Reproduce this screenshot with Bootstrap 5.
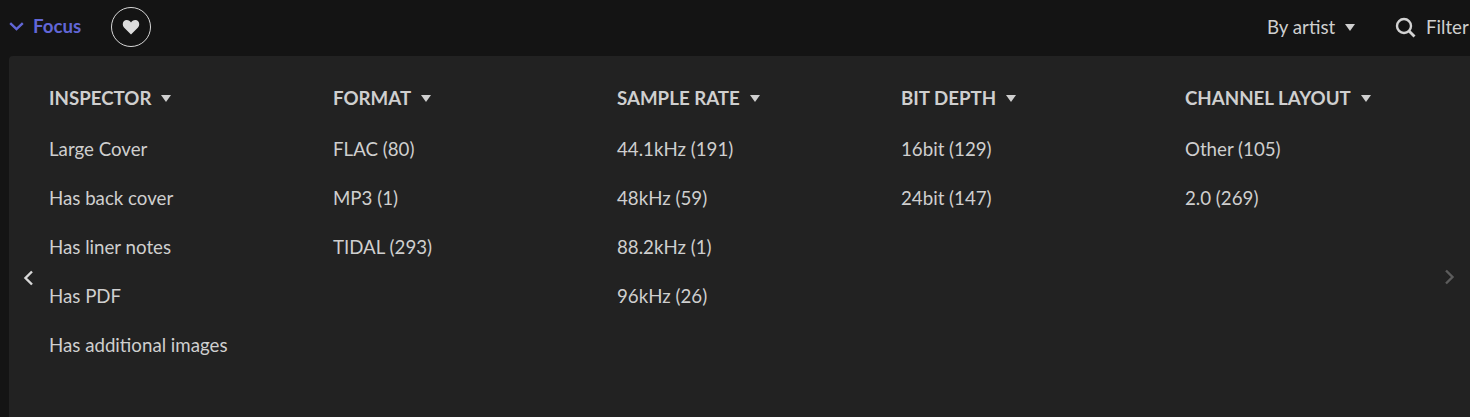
<!DOCTYPE html>
<html lang="en">
<head>
<meta charset="utf-8">
<title>Focus</title>
<link href="https://cdn.jsdelivr.net/npm/bootstrap@5.3.0/dist/css/bootstrap.min.css" rel="stylesheet">
<style>
html, body { height: 417px; overflow: hidden; }
body { background: #141414; color: #cfcfcf; font-family: Lato, sans-serif; font-size: 18.7px; line-height: 1.2; }
.top-bar { height: 56px; padding-left: 9px; padding-bottom: 2px; }
.focus-link { color: #6166d6; font-weight: 700; width: 102px; gap: 9px; padding-bottom: 2px; }
.heart-ring { width: 40px; height: 40px; border: 1.5px solid #d8d8d8; border-radius: 50%; }
.tools { width: 203px; flex: none; }
.sort-by { width: 128px; gap: 10px; }
.filter-box { gap: 10px; }
.caret-mark { width: 0; height: 0; border-left: 5.500px solid transparent; border-right: 5.500px solid transparent; border-top: 7px solid currentColor; }
.panel { height: 361px; margin-left: 9px; background: #222; border-top-left-radius: 4px; padding-left: 40px; }
.col-block { width: 284px; flex: none; padding-top: 32px; }
.col-title { height: 20px; margin-bottom: 30px; font-weight: 700; white-space: nowrap; }
.col-title .caret-mark { margin-top: 1px; margin-left: 10px; }
.col-item { height: 49px; line-height: 22px; white-space: nowrap; }
.arrow-left { position: absolute; left: 23px; top: 270px; }
.arrow-right { position: absolute; left: 1444px; top: 269px; }
</style>
</head>
<body>
<header class="top-bar d-flex align-items-center">
  <div class="focus-link d-flex align-items-center">
    <svg width="15" height="9" viewBox="0 0 15 9"><path d="M1.200 1.200 7.500 7.200l6.300-6" fill="none" stroke="#6166d6" stroke-width="2.400"/></svg>
    <span>Focus</span>
  </div>
  <div class="heart-ring d-flex align-items-center justify-content-center">
    <svg width="18" height="16" viewBox="0 0 18 16"><path d="M9 15.500 2 8.500C-.5 5.500 1 1 4.700 1 6.700 1 8.200 2 9 3.500 9.800 2 11.300 1 13.300 1 17 1 18.500 5.500 16 8.500Z" fill="#dcdcdc"/></svg>
  </div>
  <div class="ms-auto tools d-flex align-items-center">
    <div class="sort-by d-flex align-items-center">By artist<span class="caret-mark"></span></div>
    <div class="filter-box d-flex align-items-center">
      <svg width="21" height="21" viewBox="0 0 21 21"><circle cx="9" cy="9" r="7" fill="none" stroke="#d2d2d2" stroke-width="2.400"/><path d="m14 14 5.500 5.500" stroke="#d2d2d2" stroke-width="2.800"/></svg>
      <span>Filter</span>
    </div>
  </div>
</header>
<main class="panel d-flex">
  <section class="col-block">
    <div class="col-title d-flex align-items-center">INSPECTOR<span class="caret-mark"></span></div>
    <div class="col-item">Large Cover</div>
    <div class="col-item">Has back cover</div>
    <div class="col-item">Has liner notes</div>
    <div class="col-item">Has PDF</div>
    <div class="col-item">Has additional images</div>
  </section>
  <section class="col-block">
    <div class="col-title d-flex align-items-center">FORMAT<span class="caret-mark"></span></div>
    <div class="col-item">FLAC (80)</div>
    <div class="col-item">MP3 (1)</div>
    <div class="col-item">TIDAL (293)</div>
  </section>
  <section class="col-block">
    <div class="col-title d-flex align-items-center">SAMPLE RATE<span class="caret-mark"></span></div>
    <div class="col-item">44.1kHz (191)</div>
    <div class="col-item">48kHz (59)</div>
    <div class="col-item">88.2kHz (1)</div>
    <div class="col-item">96kHz (26)</div>
  </section>
  <section class="col-block">
    <div class="col-title d-flex align-items-center">BIT DEPTH<span class="caret-mark"></span></div>
    <div class="col-item">16bit (129)</div>
    <div class="col-item">24bit (147)</div>
  </section>
  <section class="col-block">
    <div class="col-title d-flex align-items-center">CHANNEL LAYOUT<span class="caret-mark"></span></div>
    <div class="col-item">Other (105)</div>
    <div class="col-item">2.0 (269)</div>
  </section>
</main>
<svg class="arrow-left" width="11" height="16" viewBox="0 0 11 16"><path d="M9 1.500 2.500 8 9 14.500" fill="none" stroke="#d8d8d8" stroke-width="2.400"/></svg>
<svg class="arrow-right" width="11" height="16" viewBox="0 0 11 16"><path d="M2 1.500 8.500 8 2 14.500" fill="none" stroke="#5c5c5c" stroke-width="2.400"/></svg>
</body>
</html>
